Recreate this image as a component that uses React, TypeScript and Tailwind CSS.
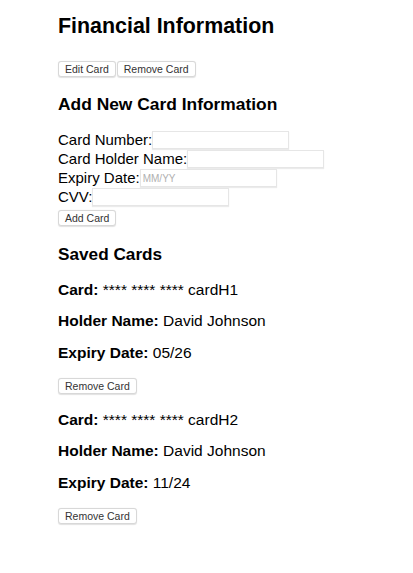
import React from 'react';

const btn =
  'h-[16px] px-[6px] rounded-[3px] border border-[#d8d8d8] bg-white text-[10.5px] leading-none text-[#333] shadow-[0_0.5px_1px_rgba(0,0,0,0.12)]';

const input =
  'h-[18px] w-[137px] border border-[#e6e6e6] bg-white px-[2px] text-[10px] text-black placeholder:text-[#b0b0b0] shadow-[0_1px_1px_rgba(0,0,0,0.08)] outline-none';

const cards = [
  { id: 'cardH1', holder: 'David Johnson', expiry: '05/26' },
  { id: 'cardH2', holder: 'David Johnson', expiry: '11/24' },
];

function Field({ label, placeholder }: { label: string; placeholder?: string }) {
  return (
    <div className="flex h-[19px] items-start">
      <span className="text-[15px] leading-[18px]">{label}</span>
      <input className={input} placeholder={placeholder} />
    </div>
  );
}

export default function App() {
  return (
    <div
      className="min-h-screen bg-white pl-[58px] pt-[13px] text-black"
      style={{ fontFamily: '"Liberation Sans", Arial, sans-serif' }}
    >
      <h1 className="text-[21.4px] font-bold leading-[26px]">Financial Information</h1>

      <div className="mt-[22px] flex gap-[1px]">
        <button className={btn}>Edit Card</button>
        <button className={btn}>Remove Card</button>
      </div>

      <h2 className="mt-[16.5px] text-[17.4px] font-bold leading-[20px]">Add New Card Information</h2>

      <form className="mt-[17.5px]" onSubmit={(e) => e.preventDefault()}>
        <Field label="Card Number:" />
        <Field label="Card Holder Name:" />
        <Field label="Expiry Date:" placeholder="MM/YY" />
        <Field label="CVV:" />
        <button type="submit" className={`${btn} mt-[3px] block`}>
          Add Card
        </button>
      </form>

      <h2 className="mt-[17.5px] text-[17.2px] font-bold leading-[20px]">Saved Cards</h2>

      <div className="mt-[17.3px]">
        {cards.map((card, i) => (
          <div key={card.id} className={i > 0 ? 'mt-[16.8px]' : ''}>
            <p className="text-[15.5px] leading-[18px]">
              <strong>Card:</strong> **** **** **** {card.id}
            </p>
            <p className="mt-[13.5px] text-[15.5px] leading-[18px]">
              <strong>Holder Name:</strong> {card.holder}
            </p>
            <p className="mt-[13.5px] text-[15.5px] leading-[18px]">
              <strong>Expiry Date:</strong> {card.expiry}
            </p>
            <button className={`${btn} mt-[16.2px] block`}>Remove Card</button>
          </div>
        ))}
      </div>
    </div>
  );
}
